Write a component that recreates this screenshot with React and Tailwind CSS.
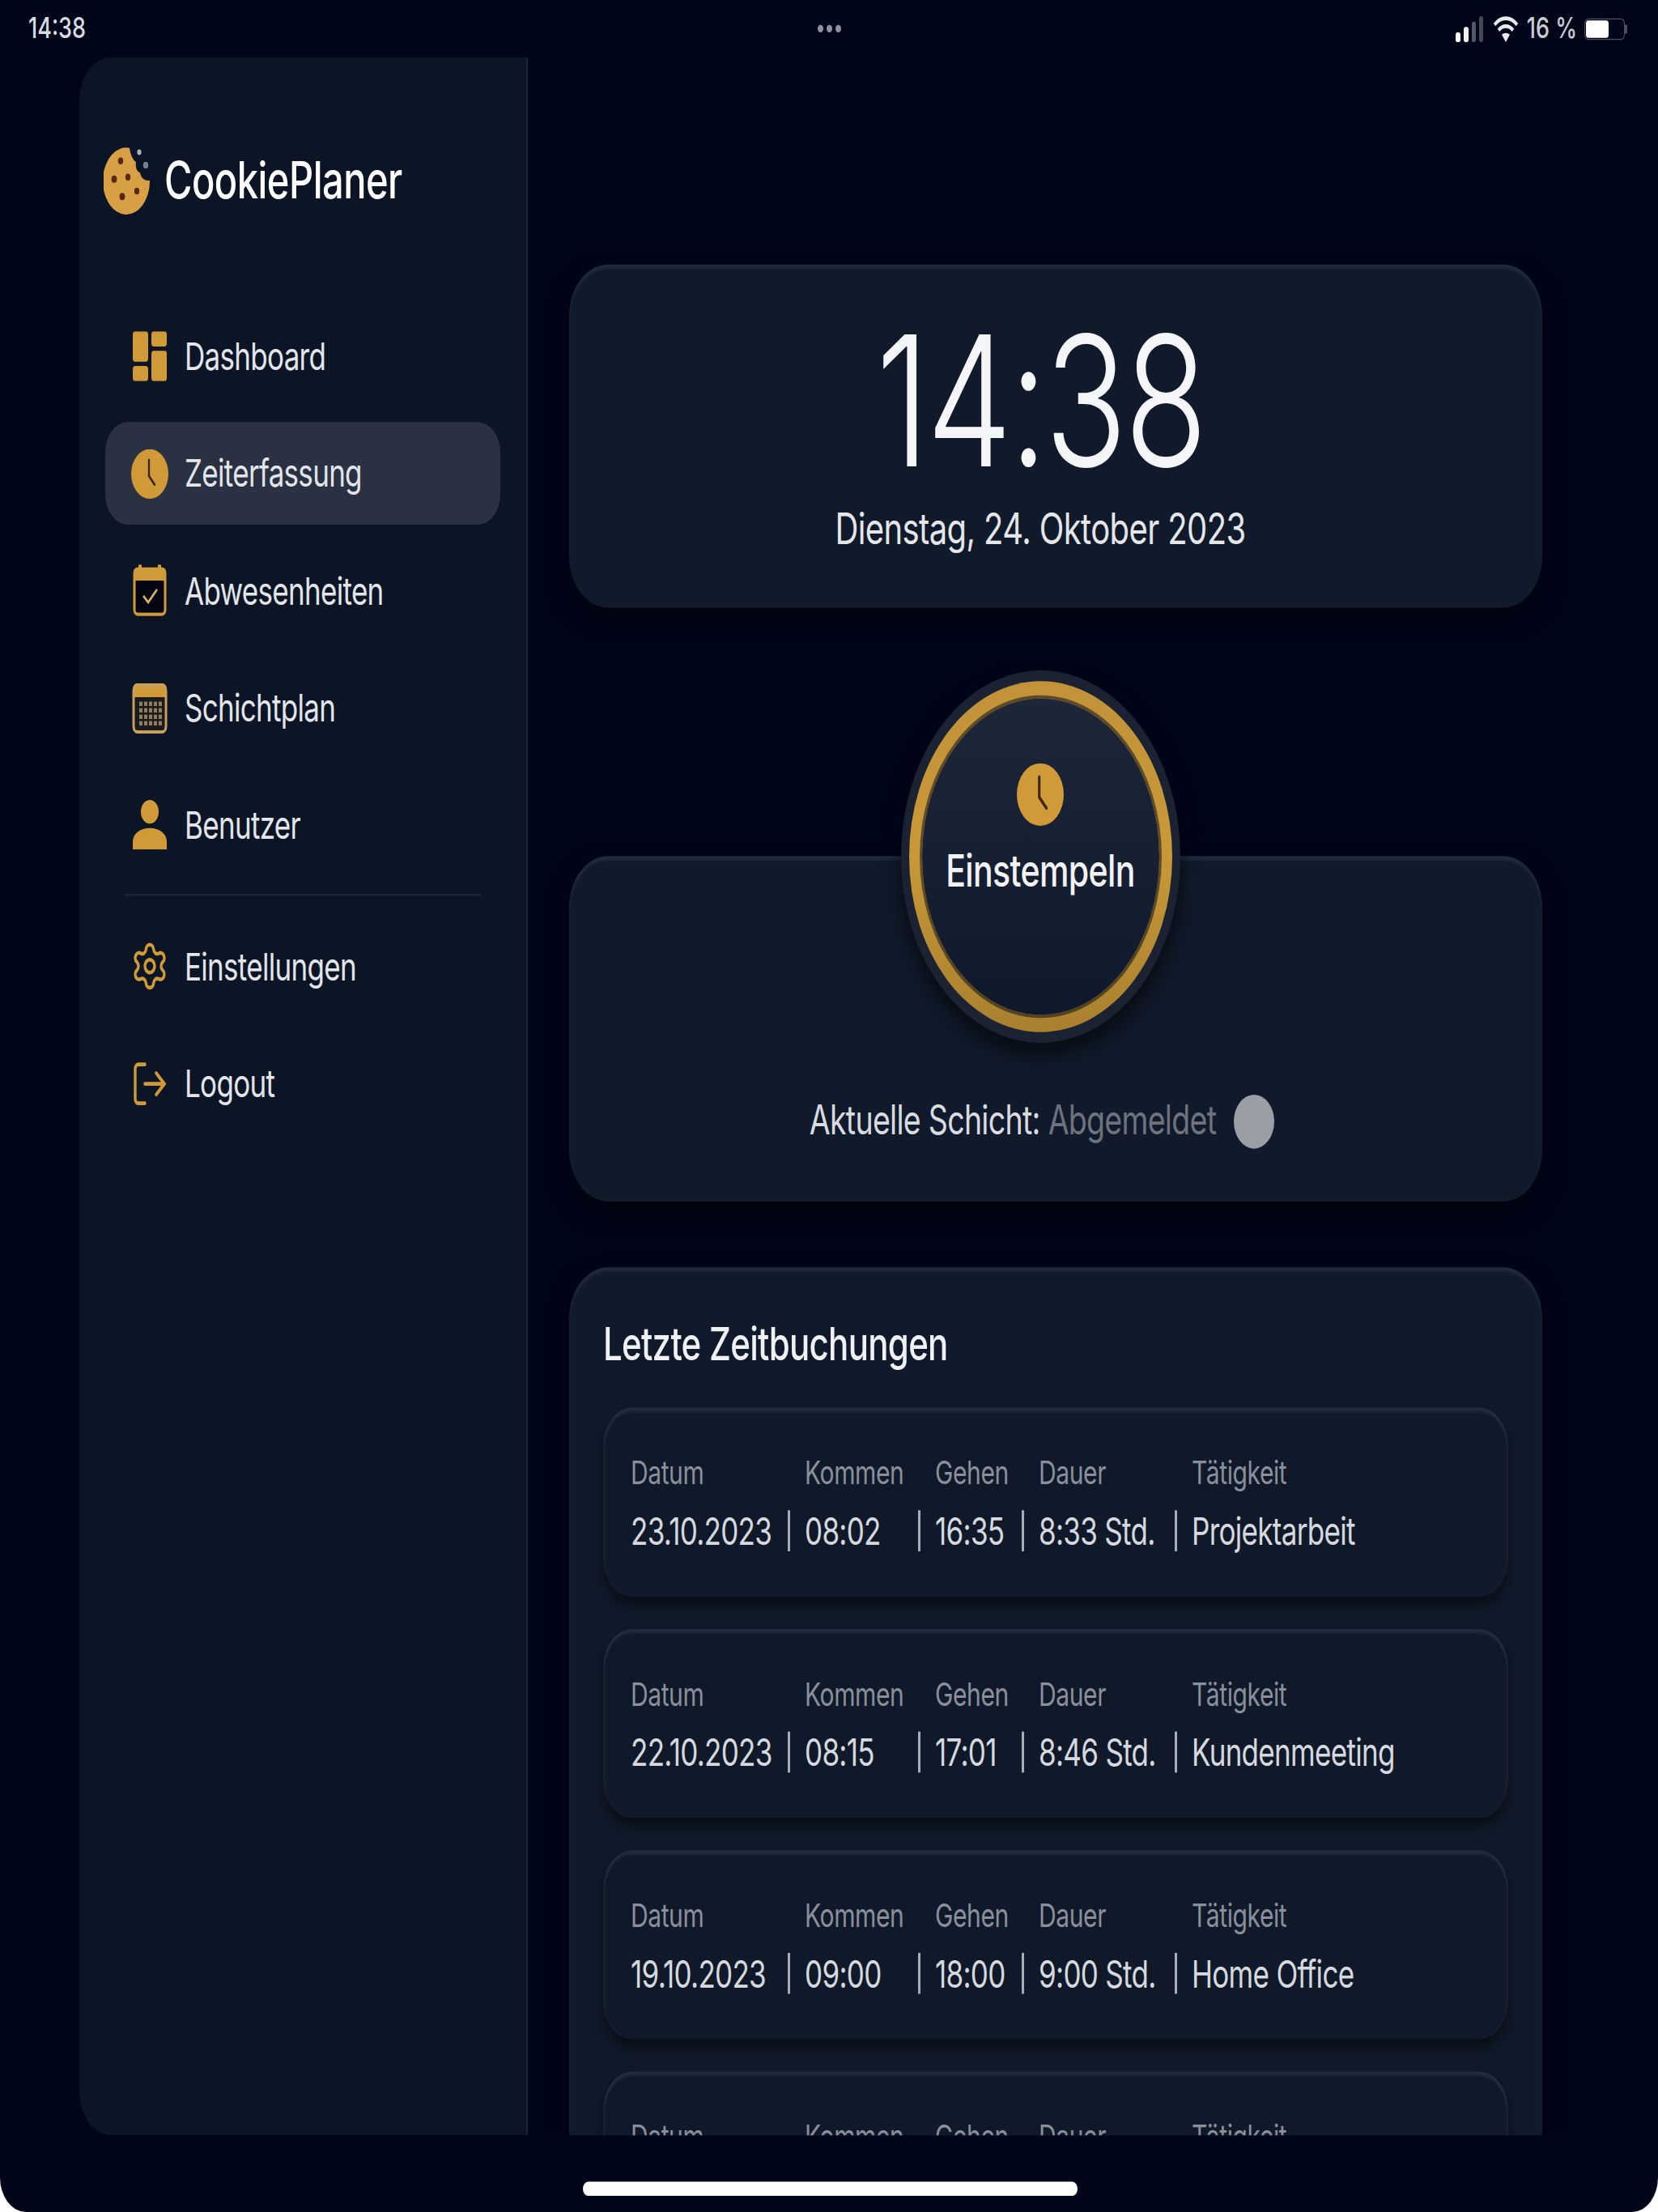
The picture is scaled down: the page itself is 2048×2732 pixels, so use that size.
import { Settings, LogOut } from 'lucide-react';

const GOLD = '#d09a38';

const bookings = [
    { datum: '23.10.2023', kommen: '08:02', gehen: '16:35', dauer: '8:33 Std.', taetigkeit: 'Projektarbeit' },
    { datum: '22.10.2023', kommen: '08:15', gehen: '17:01', dauer: '8:46 Std.', taetigkeit: 'Kundenmeeting' },
    { datum: '19.10.2023', kommen: '09:00', gehen: '18:00', dauer: '9:00 Std.', taetigkeit: 'Home Office' },
    null,
];

function CookieIcon() {
    return (
        <svg width="58" height="64" viewBox="0 0 58 64" className="shrink-0">
            <path
                d="M32 2 A29 31 0 1 0 57 32 C51 33 46 30 45 25 C41 24 39 20 40 15 C36 13 33 8 32 2 Z"
                fill="#d8a044"
            />
            <circle cx="21" cy="14" r="3.2" fill="#5c2413" />
            <circle cx="13" cy="31" r="3.4" fill="#5c2413" />
            <circle cx="30" cy="29" r="3.2" fill="#5c2413" />
            <circle cx="23" cy="47" r="3.4" fill="#5c2413" />
            <circle cx="41" cy="42" r="3.2" fill="#5c2413" />
            <circle cx="44" cy="6" r="2.6" fill="#a8b3c2" />
            <circle cx="52" cy="18" r="3.2" fill="#6f8294" />
        </svg>
    );
}

function DashboardIcon() {
    return (
        <svg width="44" height="46" viewBox="0 0 44 46">
            <rect x="1" y="0" width="19" height="28" rx="3" fill={GOLD} />
            <rect x="1" y="32" width="19" height="14" rx="3" fill={GOLD} />
            <rect x="24" y="0" width="19" height="14" rx="3" fill={GOLD} />
            <rect x="24" y="18" width="19" height="28" rx="3" fill={GOLD} />
        </svg>
    );
}

function ClockIcon({ size = 46 }) {
    return (
        <svg width={size} height={size} viewBox="0 0 46 46">
            <circle cx="23" cy="23" r="23" fill={GOLD} />
            <path d="M22 10 V25 L29 33" fill="none" stroke="#3d2410" strokeWidth="2.4" strokeLinecap="round" />
        </svg>
    );
}

function AbsenceIcon() {
    return (
        <svg width="44" height="48" viewBox="0 0 44 48">
            <path d="M10 0 V5 M34 0 V5" stroke={GOLD} strokeWidth="4" />
            <path d="M6 3 H38 A4 4 0 0 1 42 7 V15 H2 V7 A4 4 0 0 1 6 3 Z" fill={GOLD} />
            <rect x="3" y="4" width="38" height="42" rx="4" fill="none" stroke={GOLD} strokeWidth="3" />
            <rect x="5" y="15" width="34" height="29" fill="#040712" />
            <path d="M14 29 L20 35 L31 23" fill="none" stroke="#d9b26a" strokeWidth="2.4" />
        </svg>
    );
}

function ScheduleIcon() {
    return (
        <svg width="46" height="48" viewBox="0 0 46 48">
            <path d="M7 1 H39 A5 5 0 0 1 44 6 V14 H2 V6 A5 5 0 0 1 7 1 Z" fill={GOLD} />
            <rect x="3" y="3" width="40" height="43" rx="5" fill="none" stroke="#c9a05a" strokeWidth="3" />
            <rect x="5" y="14" width="36" height="30" fill="#1b1a1c" />
            {[0, 1, 2, 3].map((r) =>
                [0, 1, 2, 3, 4].map((c) => (
                    <rect key={`${r}-${c}`} x={10 + c * 6} y={18 + r * 6} width="4" height="4" fill="#8f7f60" />
                ))
            )}
        </svg>
    );
}

function UserIcon() {
    return (
        <svg width="44" height="46" viewBox="0 0 44 46">
            <circle cx="22" cy="11" r="11" fill={GOLD} />
            <path d="M1 46 V39 C1 31 10 26 22 26 C34 26 43 31 43 39 V46 Z" fill={GOLD} />
        </svg>
    );
}

const navItems = [
    { label: 'Dashboard', icon: <DashboardIcon /> },
    { label: 'Zeiterfassung', icon: <ClockIcon />, active: true },
    { label: 'Abwesenheiten', icon: <AbsenceIcon /> },
    { label: 'Schichtplan', icon: <ScheduleIcon /> },
    { label: 'Benutzer', icon: <UserIcon /> },
];

const bottomItems = [
    { label: 'Einstellungen', icon: <Settings size={48} color={GOLD} strokeWidth={1.7} /> },
    { label: 'Logout', icon: <LogOut size={48} color={GOLD} strokeWidth={1.7} /> },
];

function NavRow({ item }) {
    return (
        <div
            className={`flex h-[95px] items-center rounded-[28px] pl-[30px] ${item.active ? 'bg-[#2a3142]' : ''}`}
        >
            <span className="flex w-[50px] justify-center">{item.icon}</span>
            <span className="ml-[18px] text-[35px] tracking-[-0.7px] text-[#e2e5ea]">{item.label}</span>
        </div>
    );
}

function StatusBar() {
    return (
        <div className="flex h-[53px] items-center justify-between pl-[35px] pr-[38px]">
            <span className="text-[27px] font-medium text-[#d8dbe0]">14:38</span>
            <div className="flex gap-[4px] pl-[146px]">
                <span className="h-[7px] w-[7px] rounded-full bg-[#8d929b]" />
                <span className="h-[7px] w-[7px] rounded-full bg-[#8d929b]" />
                <span className="h-[7px] w-[7px] rounded-full bg-[#8d929b]" />
            </div>
            <div className="flex items-center">
                <svg width="36" height="24" viewBox="0 0 36 24">
                    <rect x="1" y="15" width="6" height="9" rx="2" fill="#fff" />
                    <rect x="11" y="10" width="6" height="14" rx="2" fill="#f0f0f0" />
                    <rect x="21" y="5" width="5" height="19" rx="2" fill="#555a64" />
                    <rect x="30" y="0" width="5" height="24" rx="2" fill="#444953" />
                </svg>
                <svg className="ml-[12px]" width="30" height="24" viewBox="0 0 30 24">
                    <path d="M1 8 C9 0 21 0 29 8" fill="none" stroke="#e9eaec" strokeWidth="3.5" />
                    <path d="M6 13 C11 8 19 8 24 13" fill="none" stroke="#e9eaec" strokeWidth="3.5" />
                    <path d="M15 24 L10 17 C13 15 17 15 20 17 Z" fill="#e9eaec" />
                </svg>
                <span className="ml-[11px] text-[27px] font-medium text-[#c9ccd2]">16 %</span>
                <div className="ml-[9px] flex h-[20px] w-[50px] items-center rounded-[5px] border border-[#4a4f59] p-[1px]">
                    <div className="h-full w-[60%] rounded-[3px] bg-white" />
                </div>
                <span className="h-[8px] w-[3px] bg-[#4a4f59]" />
            </div>
        </div>
    );
}

function Sidebar() {
    return (
        <aside className="flex w-[554px] shrink-0 flex-col rounded-tl-[40px] rounded-bl-[40px] border-r-2 border-[#1c2534] bg-[#0c1525] pl-[32px] pr-[32px]">
            <div className="mt-[79px] flex items-center">
                <span className="-ml-[2px]">
                    <CookieIcon />
                </span>
                <span className="ml-[17px] text-[47px] font-medium tracking-[-0.5px] text-white">CookiePlaner</span>
            </div>
            <nav className="mt-[80px] flex flex-col gap-[13.5px]">
                {navItems.map((item) => (
                    <NavRow key={item.label} item={item} />
                ))}
            </nav>
            <div className="mx-[24px] mt-[16px] mb-[18px] h-[2px] bg-[#1b2433]" />
            <div className="flex flex-col gap-[13.5px]">
                {bottomItems.map((item) => (
                    <NavRow key={item.label} item={item} />
                ))}
            </div>
        </aside>
    );
}

function Cell({ width, value, sep = true }) {
    return (
        <div className={`flex items-center justify-between ${width}`}>
            <span>{value}</span>
            {sep && <span className="mr-[18px] h-[38px] w-[3px] bg-[#a7adb7]" />}
        </div>
    );
}

function BookingRow({ booking }) {
    const labels = ['Datum', 'Kommen', 'Gehen', 'Dauer', 'Tätigkeit'];
    const widths = ['w-[215px]', 'w-[161px]', 'w-[128px]', 'w-[189px]', 'w-[300px]'];
    return (
        <div className="h-[175px] shrink-0 rounded-[36px] bg-[#101929] pl-[34px] pt-[41px] shadow-[inset_0_4px_3px_rgba(130,145,170,0.16),inset_3px_0_3px_rgba(130,145,170,0.05),inset_-3px_0_3px_rgba(130,145,170,0.05),0_8px_14px_rgba(0,0,0,0.45)]">
            <div className="flex h-[38px] items-center text-[30px] tracking-[-0.4px] text-[#8a909b]">
                {labels.map((l, i) => (
                    <div key={l} className={widths[i]}>
                        {l}
                    </div>
                ))}
            </div>
            {booking && (
                <div className="mt-[15px] flex h-[40px] items-center text-[35px] tracking-[-0.7px] text-[#d5d9df]">
                    <Cell width={widths[0]} value={booking.datum} />
                    <Cell width={widths[1]} value={booking.kommen} />
                    <Cell width={widths[2]} value={booking.gehen} />
                    <Cell width={widths[3]} value={booking.dauer} />
                    <Cell width={widths[4]} value={booking.taetigkeit} sep={false} />
                </div>
            )}
        </div>
    );
}

const cardClass =
    'rounded-[48px] bg-[#101a2a] shadow-[inset_0_4px_3px_rgba(130,145,170,0.14),0_10px_24px_rgba(0,0,0,0.55)]';

function Main() {
    return (
        <main className="ml-[51px] flex w-[1202px] shrink-0 flex-col pt-[192px]">
            <section className={`flex h-[318px] shrink-0 flex-col items-center pt-[42px] pr-[38px] ${cardClass}`}>
                <div className="text-[168px] leading-[168px] font-[350] tracking-[-3.5px] text-[#f4f5f7]">14:38</div>
                <div className="mt-[10px] text-[40px] leading-[50px] tracking-[-0.6px] text-[#e4e6ea]">
                    Dienstag, 24. Oktober 2023
                </div>
            </section>

            <section className={`mt-[230px] flex h-[320px] shrink-0 flex-col items-center pr-[38px] ${cardClass}`}>
                <div className="-mt-[172px] h-[345px] w-[345px] shrink-0 rounded-full bg-[#1b2333] p-[10px] shadow-[0_10px_22px_rgba(0,0,0,0.6)]">
                    <div className="h-full w-full rounded-full bg-linear-to-b from-[#c2923a] via-[#c89838] to-[#a8802e] p-[16px]">
                        <div className="flex h-full w-full flex-col items-center rounded-full bg-linear-to-b from-[#1e2639] to-[#10192b] pt-[60px] shadow-[0_0_0_3px_rgba(10,14,24,0.55)]">
                            <ClockIcon size={58} />
                            <div className="mt-[17px] text-[41px] leading-[48px] font-medium tracking-[-0.6px] text-[#f2f3f5]">
                                Einstempeln
                            </div>
                        </div>
                    </div>
                </div>
                <div className="mt-[47px] ml-[4px] flex h-[51px] items-center text-[37.5px] tracking-[-0.7px]">
                    <span className="text-[#d8dbe0]">Aktuelle Schicht:</span>
                    <span className="ml-[10px] text-[#6d737d]">Abgemeldet</span>
                    <span className="ml-[22px] h-[50px] w-[50px] rounded-full bg-[#9a9ea5]" />
                </div>
            </section>

            <section className={`mt-[61px] flex shrink-0 flex-col pl-[42px] pr-[42px] pt-[49px] ${cardClass}`}>
                <h2 className="text-[42px] leading-[44px] font-medium tracking-[-0.7px] text-[#f0f1f4]">
                    Letzte Zeitbuchungen
                </h2>
                <div className="mt-[37px] flex flex-col gap-[30px] pb-[40px]">
                    {bookings.map((b, i) => (
                        <BookingRow key={i} booking={b} />
                    ))}
                </div>
            </section>
        </main>
    );
}

export default function App() {
    // the whole screen is stretched vertically in the screenshot
    return (
        <div className="h-[2732px] w-[2048px] overflow-hidden bg-white">
            <div className="flex h-[2049px] w-[2048px] origin-top scale-y-[1.3333] flex-col overflow-hidden rounded-b-[32px] bg-[#01051a] font-['Inter',sans-serif]">
                <StatusBar />
                <div className="flex h-[1925px] shrink-0 overflow-hidden pl-[98px]">
                    <Sidebar />
                    <Main />
                </div>
                <div className="flex flex-1 justify-center pt-[43px]">
                    <div className="ml-[2px] h-[13px] w-[611px] rounded-full bg-white" />
                </div>
            </div>
        </div>
    );
}
